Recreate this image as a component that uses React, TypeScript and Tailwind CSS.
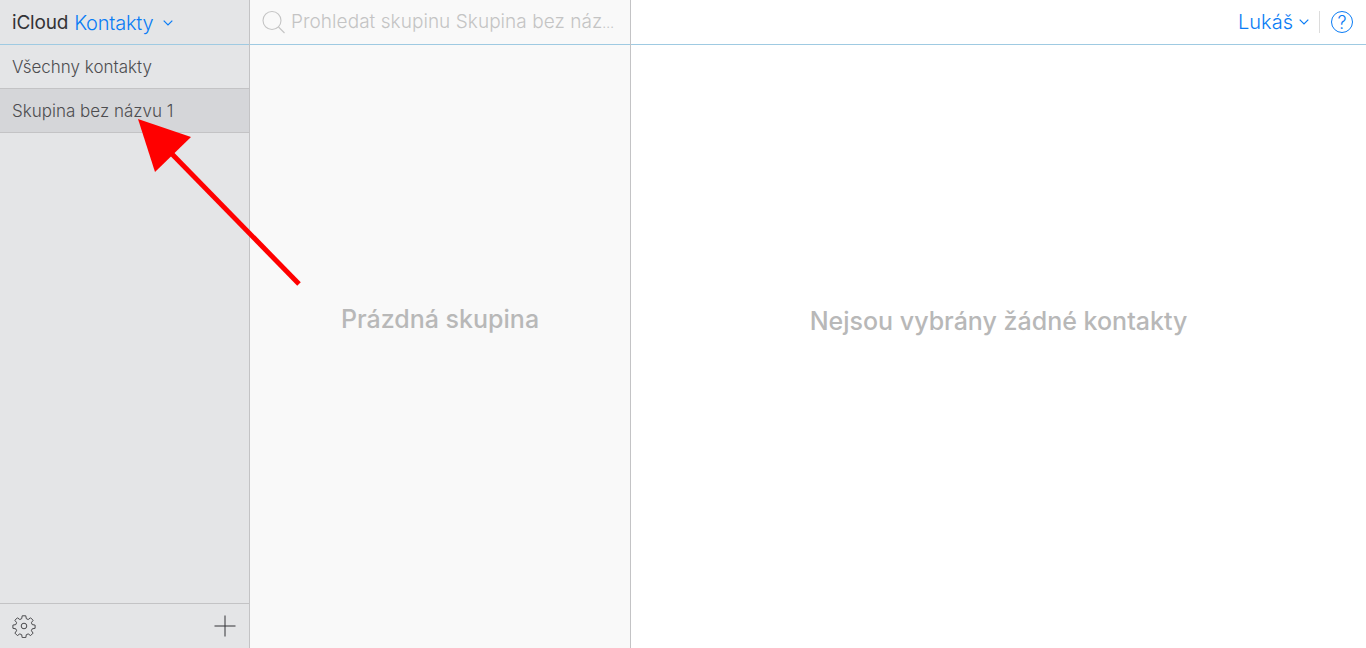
const font = { fontFamily: 'Inter, sans-serif' };

const Chevron = ({ className }: { className: string }) => (
  <svg className={className} width="10" height="6" viewBox="0 0 10 6" fill="none" stroke="#0a7cf5" strokeWidth="1.2">
    <path d="M0.7 0.7L5 5l4.3-4.3" />
  </svg>
);

const GearIcon = () => (
  <svg width="24" height="24" viewBox="0 0 24 24" fill="none" stroke="#4a4a4d" strokeWidth="1">
    <circle cx="12" cy="12" r="2.8" />
    <path d="M10.2 1.8h3.6l.5 2.9 1.9.8 2.4-1.7 2.5 2.5-1.7 2.4.8 1.9 2.9.5v3.2l-2.9.5-.8 1.9 1.7 2.4-2.5 2.5-2.4-1.7-1.9.8-.5 2.9h-3.6l-.5-2.9-1.9-.8-2.4 1.7-2.5-2.5 1.7-2.4-.8-1.9-2.9-.5v-3.2l2.9-.5.8-1.9-1.7-2.4 2.5-2.5 2.4 1.7 1.9-.8z" strokeLinejoin="round" />
  </svg>
);

const PlusIcon = () => (
  <svg width="22" height="22" viewBox="0 0 22 22" stroke="#333336" strokeWidth="1">
    <path d="M0.5 11h21M11 0.5v21" />
  </svg>
);

const SearchIcon = () => (
  <svg width="24" height="24" viewBox="0 0 24 24" fill="none" stroke="#c4c4c4" strokeWidth="1.1">
    <circle cx="10" cy="10.5" r="9" />
    <path d="M16.5 17l6 6" />
  </svg>
);

const Arrow = () => (
  <svg className="absolute left-0 top-0 pointer-events-none" width="320" height="300" viewBox="0 0 320 300">
    <polygon points="138,119 191,137 155,172" fill="#ff0000" />
    <path d="M171 153L299 284" stroke="#ff0000" strokeWidth="5" />
  </svg>
);

export default function App() {
  return (
    <div className="relative h-[648px] w-[1366px] overflow-hidden bg-white flex" style={font}>
      {/* Groups */}
      <aside className="w-[250px] shrink-0 flex flex-col bg-[#e4e5e7] border-r border-[#c3c3c5]">
        <div className="h-[45px] shrink-0 flex items-center pl-3 pt-[2px] border-b border-[#9fcae2]">
          <span className="text-[19px] tracking-[-0.2px] text-[#333336]">iCloud</span>
          <span className="ml-[6px] text-[20px] tracking-[-0.2px] text-[#0a7cf5] font-light">Kontakty</span>
          <Chevron className="ml-[10px]" />
        </div>
        <div className="h-[44px] shrink-0 flex items-center pl-3 pt-[2px] border-b border-[#c3c3c5] text-[17px] text-[#4d4d50] font-light">
          Všechny kontakty
        </div>
        <div className="h-[44px] shrink-0 flex items-center pl-3 pt-[2px] border-b border-[#c3c3c5] bg-[#d5d6d9] text-[17px] text-[#4d4d50] font-light">
          Skupina bez názvu 1
        </div>
        <div className="flex-1" />
        <div className="h-[45px] shrink-0 flex items-center justify-between pl-3 pr-[13px] border-t border-[#c3c3c5]">
          <GearIcon />
          <PlusIcon />
        </div>
      </aside>

      {/* Contact list */}
      <section className="w-[381px] shrink-0 flex flex-col bg-[#f9f9f9] border-r border-[#c3c3c5]">
        <div className="h-[45px] shrink-0 flex items-center pl-3 border-b border-[#9fcae2]">
          <SearchIcon />
          <span className="ml-[5px] text-[19px] tracking-[0.05px] whitespace-nowrap text-[#c4c4c4] font-light">
            Prohledat skupinu Skupina bez náz<span className="text-[14px]">…</span>
          </span>
        </div>
        <div className="flex-1 flex items-center justify-center pb-[54px] text-[25px] font-medium text-[#b8b8b8]">
          Prázdná skupina
        </div>
      </section>

      {/* Detail */}
      <main className="flex-1 flex flex-col">
        <div className="h-[45px] shrink-0 flex items-center justify-end pr-[13px] border-b border-[#9fcae2]">
          <span className="text-[20px] text-[#0a7cf5] font-light">Lukáš</span>
          <Chevron className="ml-[6px]" />
          <div className="ml-[10px] h-[22px] w-px bg-[#dcdcdc]" />
          <div className="ml-[11px] w-[22px] h-[22px] rounded-full border border-[#0a7cf5] flex items-center justify-center text-[18px] text-[#0a7cf5] font-light">
            ?
          </div>
        </div>
        <div className="flex-1 flex items-center justify-center pb-[50px] text-[25px] font-medium text-[#b8b8b8]">
          Nejsou vybrány žádné kontakty
        </div>
      </main>

      <Arrow />
    </div>
  );
}
